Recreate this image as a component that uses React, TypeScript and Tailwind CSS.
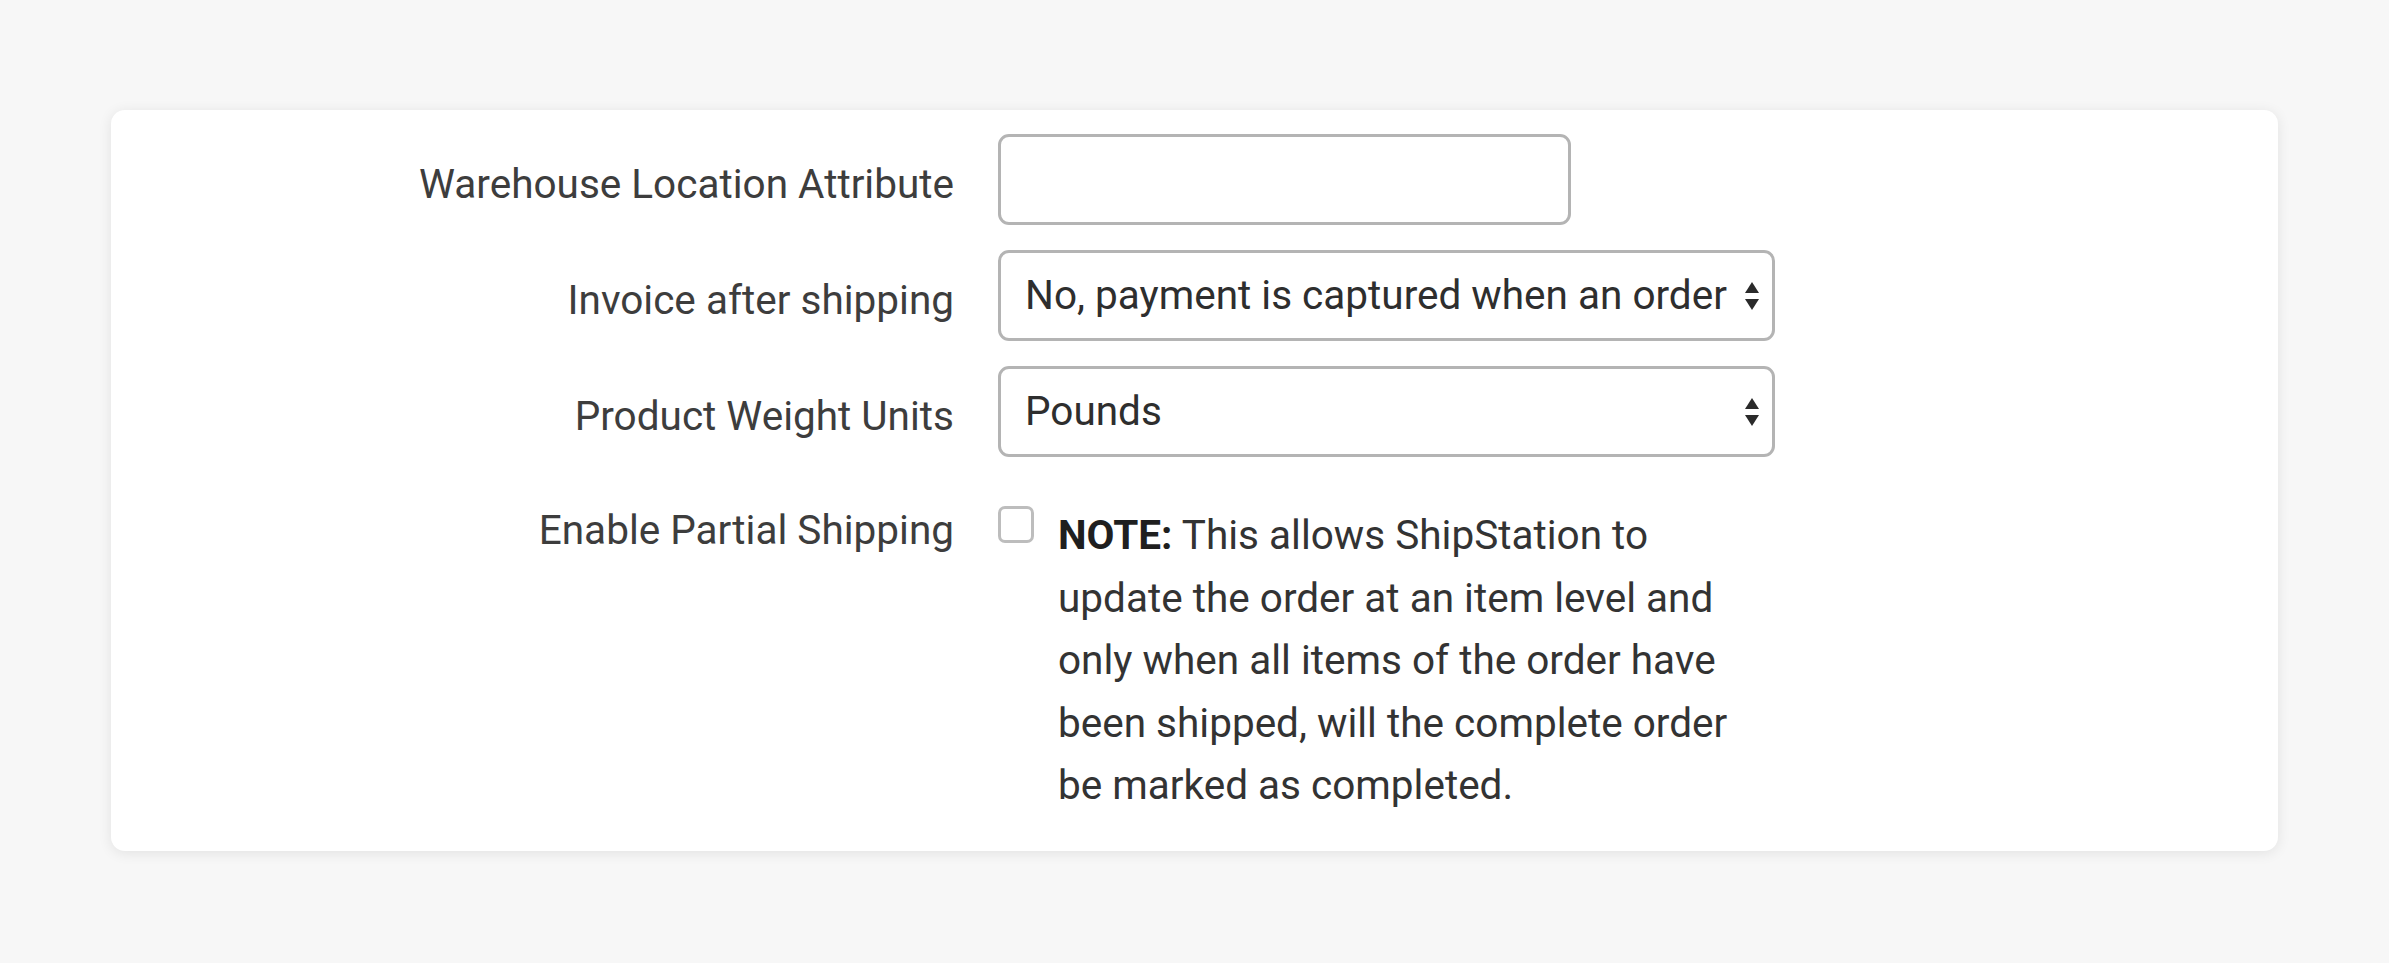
const rows = [
  { label: "Warehouse Location Attribute", kind: "input" as const },
  { label: "Invoice after shipping", kind: "select" as const, value: "No, payment is captured when an order" },
  { label: "Product Weight Units", kind: "select" as const, value: "Pounds" },
];

const labelClass = "w-[843px] shrink-0 text-right text-[40.5px] leading-[62px] text-[#3d3d3d]";
const fieldClass =
  "h-[91px] rounded-[11px] border-[3px] border-[#b4b4b4] bg-white";

const SelectArrows = () => (
  <svg width="18" height="32" viewBox="0 0 18 32" className="shrink-0">
    <path d="M9 2 L16 13 L2 13 Z" fill="#2a2a2a" />
    <path d="M9 30 L16 19 L2 19 Z" fill="#2a2a2a" />
  </svg>
);

export default function App() {
  return (
    <div
      className="min-h-[963px] w-full bg-[#f7f7f7] pl-[111px] pr-[111px] pt-[110px]"
      style={{ fontFamily: "Roboto, 'Liberation Sans', sans-serif" }}
    >
      <div className="w-[2167px] rounded-[14px] bg-white pb-[34px] pt-[24px] shadow-[0_2px_14px_rgba(0,0,0,0.09)]">
        <div className="flex flex-col gap-[25px]">
          {rows.map((row) => (
            <div key={row.label} className="flex items-center gap-[44px]">
              <div className={`${labelClass} pt-[8px]`}>{row.label}</div>
              {row.kind === "input" ? (
                <div className={`${fieldClass} w-[573px]`} />
              ) : (
                <div className={`${fieldClass} flex w-[777px] items-center justify-between pl-[24px] pr-[11px]`}>
                  <span className="truncate pr-[4px] text-[40.5px] text-[#2e2e2e]">{row.value}</span>
                  <SelectArrows />
                </div>
              )}
            </div>
          ))}
        </div>

        <div className="mt-[47px] flex items-start gap-[44px]">
          <div className={`${labelClass} -mt-[5px]`}>Enable Partial Shipping</div>
          <div className="flex items-start gap-[24px]">
            <div className="mt-[2px] h-[37px] w-[36px] shrink-0 rounded-[7px] border-[3px] border-[#bdbdbd] bg-white" />
            <p className="w-[688px] text-[40.5px] leading-[62.5px] text-[#333]">
              <span className="font-bold text-[#1f1f1f]">NOTE:</span> This allows ShipStation to
              update the order at an item level and only when all items of the order have
              been shipped, will the complete order be marked as completed.
            </p>
          </div>
        </div>
      </div>
    </div>
  );
}
